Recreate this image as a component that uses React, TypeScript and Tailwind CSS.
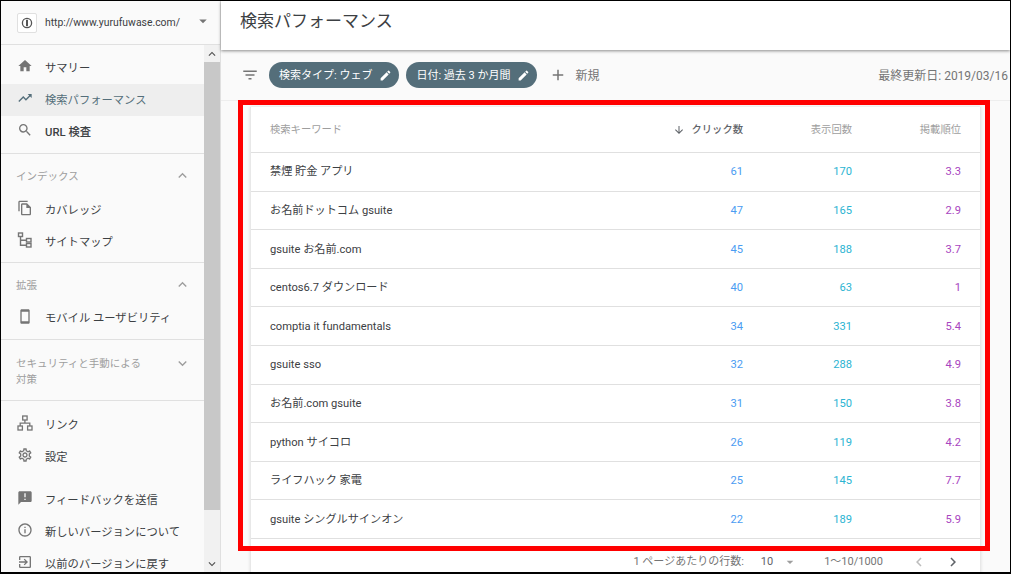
import React from 'react';
import {
  MdAdd,
  MdAnnouncement,
  MdArrowDownward,
  MdArrowDropDown,
  MdChevronLeft,
  MdChevronRight,
  MdEdit,
  MdExpandLess,
  MdExpandMore,
  MdFilterList,
  MdHome,
  MdInfoOutline,
  MdKeyboardArrowDown,
  MdKeyboardArrowUp,
  MdOutlineExitToApp,
  MdOutlineFileCopy,
  MdOutlineSettings,
  MdOutlineSmartphone,
  MdSearch,
  MdTrendingUp,
} from 'react-icons/md';

const font = 'font-[Roboto,"Noto_Sans_CJK_JP",sans-serif]';

function SitemapIcon() {
  return (
    <svg width="16" height="16" viewBox="0 0 16 16" fill="none" stroke="#757575" strokeWidth="1.4">
      <rect x="1.5" y="1" width="4" height="3.5" />
      <rect x="9.5" y="6.5" width="4.5" height="3.5" />
      <rect x="9.5" y="11.5" width="4.5" height="3.5" />
      <path d="M3.5 4.5V13.2H9.5M3.5 8.2H9.5" />
    </svg>
  );
}

function LinkIcon() {
  return (
    <svg width="16" height="16" viewBox="0 0 16 16" fill="none" stroke="#757575" strokeWidth="1.3">
      <rect x="5.7" y="1" width="4.4" height="4" />
      <rect x="1" y="11" width="4.4" height="4" />
      <rect x="10.6" y="11" width="4.4" height="4" />
      <path d="M7.9 5V8.2M3.2 11V8.2H12.8V11" />
    </svg>
  );
}

function NavItem({
  icon,
  label,
  active,
  strong,
}: {
  icon: React.ReactNode;
  label: string;
  active?: boolean;
  strong?: boolean;
}) {
  return (
    <div
      className={`flex items-center h-8 pl-4 ${active ? 'bg-[#eeeeee] text-[#546e7a]' : 'text-[#3c4043]'} ${strong ? 'font-medium' : ''}`}
    >
      <span className="flex items-center justify-center w-[16px] h-[18px] mr-[12px] -mt-1">{icon}</span>
      <span className="text-[11.3px] whitespace-nowrap mt-[2px]">{label}</span>
    </div>
  );
}

function SectionHead({ label }: { label: string }) {
  return (
    <div className="flex justify-between pl-[15px] pr-[13px] text-[10.5px] leading-[18px] text-[#9e9e9e]">
      <span>{label}</span>
      <MdExpandLess className="text-[#9e9e9e] -mt-[1px]" size={17} />
    </div>
  );
}

function Sidebar() {
  const gray = '#757575';
  return (
    <aside className="flex flex-col w-[220px] shrink-0 h-full bg-[#fafafa] border-r border-[#e0e0e0]">
      <div className="flex items-center h-[44px] shrink-0 pl-4 pr-[8px] border-b border-[#e0e0e0]">
        <span className="flex items-center justify-center w-5 h-5 bg-white border border-[#e0e0e0] rounded-[2px] mr-2">
          <svg width="12" height="12" viewBox="0 0 12 12">
            <circle cx="6" cy="6" r="4.6" fill="none" stroke="#555" strokeWidth="1.3" />
            <rect x="5" y="2.8" width="2" height="6.4" fill="#555" />
          </svg>
        </span>
        <span className="flex-1 text-[10.4px] text-[#3c4043] whitespace-nowrap">http://www.yurufuwase.com/</span>
        <MdArrowDropDown size={18} className="text-[#757575] -mt-[4px]" />
      </div>
      <div className="flex flex-1 min-h-0">
        <nav className="flex-1 min-w-0 overflow-hidden pt-[7px]">
          <NavItem icon={<MdHome size={16} color={gray} />} label="サマリー" />
          <NavItem icon={<MdTrendingUp size={16} color="#546e7a" />} label="検索パフォーマンス" active />
          <NavItem icon={<MdSearch size={16} color={gray} />} label="URL 検査" strong />
          <div className="h-px bg-[#e0e0e0] mt-[5px] mb-[14px]" />
          <SectionHead label="インデックス" />
          <div className="h-[8px]" />
          <NavItem icon={<MdOutlineFileCopy size={16} color={gray} />} label="カバレッジ" />
          <NavItem icon={<SitemapIcon />} label="サイトマップ" />
          <div className="h-px bg-[#e0e0e0] mt-[4px] mb-[14px]" />
          <SectionHead label="拡張" />
          <div className="h-[7px]" />
          <NavItem icon={<MdOutlineSmartphone size={17} color={gray} />} label="モバイル ユーザビリティ" />
          <div className="h-px bg-[#e0e0e0] mt-[5px] mb-[16px]" />
          <div className="flex justify-between pl-[15px] pr-[13px] text-[10.5px] leading-[16px] text-[#9e9e9e]">
            <span>
              セキュリティと手動による
              <br />
              対策
            </span>
            <MdExpandMore className="text-[#9e9e9e] -mt-[1px]" size={17} />
          </div>
          <div className="h-px bg-[#e0e0e0] mt-[12px] mb-[8px]" />
          <NavItem icon={<LinkIcon />} label="リンク" />
          <NavItem icon={<MdOutlineSettings size={16} color={gray} />} label="設定" />
          <div className="h-[11px]" />
          <NavItem icon={<MdAnnouncement size={16} color={gray} />} label="フィードバックを送信" />
          <NavItem icon={<MdInfoOutline size={16} color={gray} />} label="新しいバージョンについて" />
          <NavItem icon={<MdOutlineExitToApp size={16} color={gray} />} label="以前のバージョンに戻す" />
        </nav>
        <div className="flex flex-col w-[16px] shrink-0 bg-[#f1f1f1]">
          <div className="flex items-center justify-center h-[17px] shrink-0 text-[#505050]">
            <MdKeyboardArrowUp size={14} />
          </div>
          <div className="h-[448px] bg-[#c8c8c8]" />
          <div className="flex-1" />
          <div className="flex items-center justify-center h-[17px] shrink-0 text-[#505050]">
            <MdKeyboardArrowDown size={14} />
          </div>
        </div>
      </div>
    </aside>
  );
}

function Chip({ label }: { label: string }) {
  return (
    <span className="flex items-center gap-[7px] h-[26px] pl-[10px] pr-[7px] rounded-full bg-[#546e7a] text-white text-[11px] whitespace-nowrap">
      <span className="mt-[2px]">{label}</span>
      <MdEdit size={13} />
    </span>
  );
}

const rows = [
  ['禁煙 貯金 アプリ', '61', '170', '3.3'],
  ['お名前ドットコム gsuite', '47', '165', '2.9'],
  ['gsuite お名前.com', '45', '188', '3.7'],
  ['centos6.7 ダウンロード', '40', '63', '1'],
  ['comptia it fundamentals', '34', '331', '5.4'],
  ['gsuite sso', '32', '288', '4.9'],
  ['お名前.com gsuite', '31', '150', '3.8'],
  ['python サイコロ', '26', '119', '4.2'],
  ['ライフハック 家電', '25', '145', '7.7'],
  ['gsuite シングルサインオン', '22', '189', '5.9'],
];

function Table() {
  return (
    <div className="mx-[29px] w-[731px] bg-white border-x border-[#e8e8e8] shadow-[0_0_3px_rgba(0,0,0,0.12)]">
      <div className="flex items-center h-[46px] pl-[19px] pr-[19px] border-b border-[#e0e0e0] text-[10.3px] text-[#9e9e9e]">
        <span className="flex-1">検索キーワード</span>
        <span className="flex items-center justify-end w-[120px] text-[#5f6368] font-medium">
          <MdArrowDownward size={12} className="mr-[7px]" />
          クリック数
        </span>
        <span className="w-[109px] text-right">表示回数</span>
        <span className="w-[109px] text-right">掲載順位</span>
      </div>
      {rows.map((r) => (
        <div
          key={r[0]}
          className="flex items-center h-[38.6px] pt-[2px] pl-[19px] pr-[19px] border-b border-[#e0e0e0] text-[11.15px]"
        >
          <span className="flex-1 text-[#3c4043]">{r[0]}</span>
          <span className="w-[120px] text-right text-[#4b9cf2]">{r[1]}</span>
          <span className="w-[109px] text-right text-[#2cb4d2]">{r[2]}</span>
          <span className="w-[109px] text-right text-[#a845c0]">{r[3]}</span>
        </div>
      ))}
      <div className="flex items-center justify-end h-[46px] pr-[18px] text-[11px] text-[#757575]">
        <span>1 ページあたりの行数:</span>
        <span className="ml-[17px] text-[#5f6368]">10</span>
        <MdArrowDropDown size={16} className="ml-[9px] text-[#9e9e9e]" />
        <span className="ml-[26px]">1〜10/1000</span>
        <MdChevronLeft size={18} className="ml-[27px] text-[#bdbdbd]" />
        <MdChevronRight size={18} className="ml-[16px] text-[#5f6368]" />
      </div>
    </div>
  );
}

export default function App() {
  return (
    <div className={`relative flex w-[1011px] h-[574px] overflow-hidden bg-white border border-black border-b-2 ${font}`}>
      <Sidebar />
      <main className="flex flex-col flex-1 min-w-0 bg-[#fafafa]">
        <header className="flex items-center h-[49px] shrink-0 pl-[19px] bg-white shadow-[0_1px_3px_rgba(0,0,0,0.45)] z-10">
          <h1 className="text-[17px] text-[#3c4043] whitespace-nowrap -mt-[8px]">検索パフォーマンス</h1>
        </header>
        <div className="flex items-center h-[51px] shrink-0 pl-[20px] pr-[2px] border-b border-[#eeeeee]">
          <MdFilterList size={18} className="text-[#757575] mr-[10px]" />
          <Chip label="検索タイプ: ウェブ" />
          <span className="w-[7px]" />
          <Chip label="日付: 過去 3 か月間" />
          <MdAdd size={18} className="text-[#757575] ml-[12px]" />
          <span className="ml-[8px] mt-[2px] text-[12px] text-[#757575]">新規</span>
          <span className="ml-auto mt-[2px] text-[12px] text-[#757575] whitespace-nowrap">最終更新日: 2019/03/16</span>
        </div>
        <div className="pt-[6px]">
          <Table />
        </div>
      </main>
      <div className="absolute left-[237px] top-[99px] w-[752px] h-[451px] border-[5px] border-[#ff0000]" />
    </div>
  );
}
